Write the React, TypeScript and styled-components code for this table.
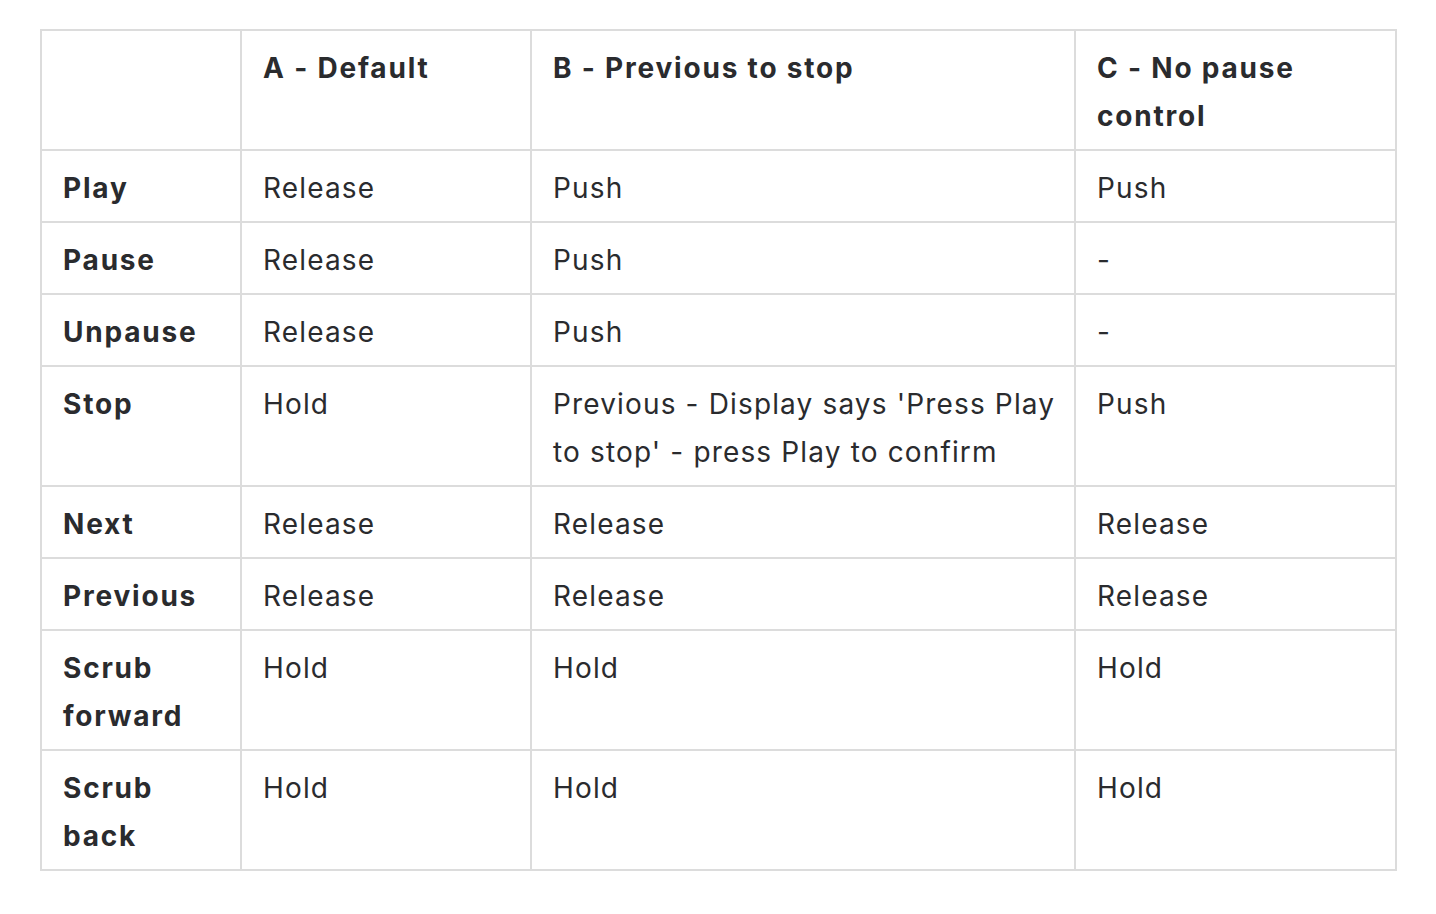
import React from "react";
import styled, { createGlobalStyle } from "styled-components";

const Global = createGlobalStyle`
  html, body { margin: 0; padding: 0; background: #ffffff; }
  body { font-family: Inter, "Noto Sans", sans-serif; color: #2a2b2e; }
`;

const Page = styled.div`
  padding: 29px 40px 0 40px;
`;

const Table = styled.table`
  border-collapse: collapse;
  table-layout: fixed;
  width: 1355px;
  font-size: 28px;
  line-height: 48px;
`;

const Cell = styled.td<{ $bold?: boolean }>`
  border: 2px solid #dcdcdc;
  padding: 13px 18px 9px 21px;
  vertical-align: top;
  text-align: left;
  font-weight: ${(p) => (p.$bold ? 700 : 400)};
  letter-spacing: ${(p) => (p.$bold ? "1.8px" : "1.15px")};
  color: #2a2b2e;
`;

const Head = styled(Cell).attrs({ as: "th" })``;

const rows: [string, string, string, string][] = [
  ["Play", "Release", "Push", "Push"],
  ["Pause", "Release", "Push", "-"],
  ["Unpause", "Release", "Push", "-"],
  ["Stop", "Hold", "Previous - Display says 'Press Play to stop' - press Play to confirm", "Push"],
  ["Next", "Release", "Release", "Release"],
  ["Previous", "Release", "Release", "Release"],
  ["Scrub forward", "Hold", "Hold", "Hold"],
  ["Scrub back", "Hold", "Hold", "Hold"],
];

export default function App() {
  return (
    <>
      <Global />
      <Page>
        <Table>
          <colgroup>
            <col style={{ width: 200 }} />
            <col style={{ width: 290 }} />
            <col style={{ width: 544 }} />
            <col style={{ width: 321 }} />
          </colgroup>
          <thead>
            <tr>
              <Head $bold></Head>
              <Head $bold>A - Default</Head>
              <Head $bold>B - Previous to stop</Head>
              <Head $bold>C - No pause control</Head>
            </tr>
          </thead>
          <tbody>
            {rows.map((r) => (
              <tr key={r[0]}>
                <Cell $bold>{r[0]}</Cell>
                <Cell>{r[1]}</Cell>
                <Cell>{r[2]}</Cell>
                <Cell>{r[3]}</Cell>
              </tr>
            ))}
          </tbody>
        </Table>
      </Page>
    </>
  );
}
